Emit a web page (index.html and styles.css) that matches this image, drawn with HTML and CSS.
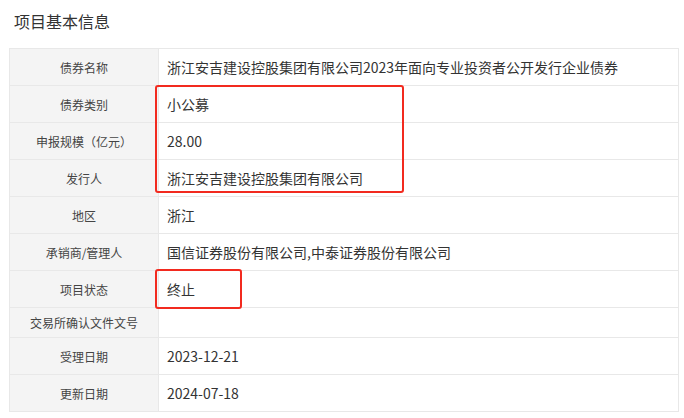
FILE: index.html
```html
<!DOCTYPE html>
<html lang="zh-CN">
<head>
<meta charset="utf-8">
<title>项目基本信息</title>
<link rel="stylesheet" href="styles.css">
</head>
<body>
<div class="page">
  <h2 class="title">项目基本信息</h2>
  <div class="info">
    <div class="row"><div class="label">债券名称</div><div class="value">浙江安吉建设控股集团有限公司2023年面向专业投资者公开发行企业债券</div></div>
    <div class="row"><div class="label">债券类别</div><div class="value">小公募</div></div>
    <div class="row"><div class="label">申报规模（亿元）</div><div class="value">28.00</div></div>
    <div class="row"><div class="label">发行人</div><div class="value">浙江安吉建设控股集团有限公司</div></div>
    <div class="row"><div class="label">地区</div><div class="value">浙江</div></div>
    <div class="row"><div class="label">承销商/管理人</div><div class="value">国信证券股份有限公司,中泰证券股份有限公司</div></div>
    <div class="row"><div class="label">项目状态</div><div class="value">终止</div></div>
    <div class="row row-short"><div class="label">交易所确认文件文号</div><div class="value"></div></div>
    <div class="row"><div class="label">受理日期</div><div class="value">2023-12-21</div></div>
    <div class="row"><div class="label">更新日期</div><div class="value">2024-07-18</div></div>
    <div class="mark mark-a"></div>
    <div class="mark mark-b"></div>
  </div>
</div>
</body>
</html>
```
FILE: styles.css
```css
html, body {
  margin: 0;
  padding: 0;
  background: #fff;
}
body {
  font-family: "Microsoft YaHei", "Noto Sans CJK SC", "Noto Sans", sans-serif;
  color: #333;
}
.page {
  padding: 0 0 0 9px;
  width: 670px;
}
.title {
  margin: 0;
  padding: 10px 0 0 5px;
  height: 48px;
  box-sizing: border-box;
  font-size: 16px;
  font-weight: normal;
  line-height: 22px;
  color: #333;
}
.info {
  position: relative;
  border-left: 1px solid #e8e8e8;
  border-right: 1px solid #e8e8e8;
  border-bottom: 1px solid #e8e8e8;
}
.row {
  display: grid;
  grid-template-columns: 149px 1fr;
  height: 37px;
  box-sizing: border-box;
  border-top: 1px solid #e8e8e8;
}
.row-short {
  height: 30px;
}
.label {
  background: #f4f4f4;
  border-right: 1px solid #e8e8e8;
  font-size: 12px;
  color: #444;
  display: flex;
  align-items: center;
  justify-content: center;
}
.value {
  display: flex;
  align-items: center;
  padding-left: 8px;
  font-size: 14px;
  color: #333;
}
.mark {
  position: absolute;
  border: 2px solid #f22a1f;
  border-radius: 3px;
  box-sizing: border-box;
}
.mark-a {
  left: 145px;
  top: 37px;
  width: 249px;
  height: 108px;
}
.mark-b {
  left: 145px;
  top: 221px;
  width: 87px;
  height: 40px;
}
```
